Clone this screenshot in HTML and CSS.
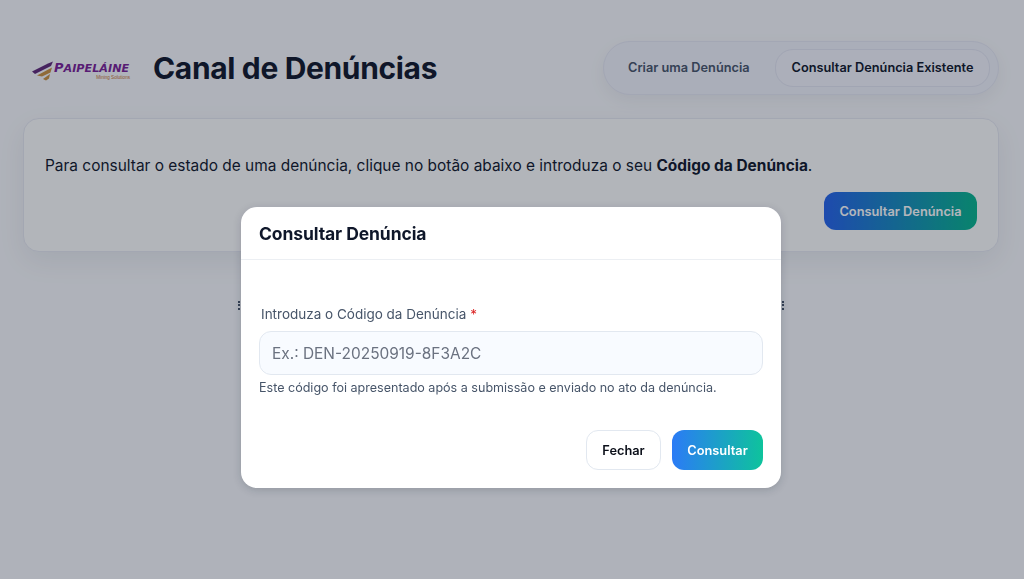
FILE: index.html
```html
<!DOCTYPE html>
<html lang="pt">
<head>
  <meta charset="UTF-8" />
  <meta name="viewport" content="width=device-width, initial-scale=1" />
  <title>Canal de Denúncias</title>
  <link rel="stylesheet" href="styles.css">
</head>
<body>
  <header class="topbar">
    <div class="brand">
      <svg class="logo" viewBox="0 0 100 24" width="100" height="24" aria-label="Paipeláine">
        <path d="M0 14.5 L16 6.5 L21 4.5 L19 9 L3 17 Z" fill="#5f2a78" />
        <path d="M5 18.5 L20 10.5 L18.5 15.5 L10 19.5 Z" fill="#c9913f" />
        <path d="M11 22 L18 17 L17 21.5 L14 23.5 Z" fill="#c9913f" />
        <text x="22" y="14.5" class="logo-name"><tspan class="logo-cap">P</tspan>AIPELÁINE</text>
        <text x="98" y="22" class="logo-sub" text-anchor="end">Mining Solutions</text>
      </svg>
      <h1>Canal de Denúncias</h1>
    </div>
    <nav class="tabs">
      <a class="tab" href="#">Criar uma Denúncia</a>
      <a class="tab active" href="#">Consultar Denúncia Existente</a>
    </nav>
  </header>

  <section class="card">
    <p>Para consultar o estado de uma denúncia, clique no botão abaixo e introduza o seu <strong>Código da Denúncia</strong>.</p>
    <div class="card-actions">
      <button class="btn btn-grad btn-open">Consultar Denúncia</button>
    </div>
  </section>

  <div class="note-edge"></div>

  <div class="overlay">
    <div class="modal">
      <div class="modal-head">
        <h2>Consultar Denúncia</h2>
      </div>
      <div class="modal-body">
        <label class="field-label" for="codigo">Introduza o Código da Denúncia <span class="req">*</span></label>
        <input class="field" id="codigo" type="text" placeholder="Ex.: DEN-20250919-8F3A2C" />
        <small class="hint">Este código foi apresentado após a submissão e enviado no ato da denúncia.</small>
      </div>
      <div class="modal-foot">
        <button class="btn btn-plain">Fechar</button>
        <button class="btn btn-grad btn-bright">Consultar</button>
      </div>
    </div>
  </div>
</body>
</html>
```

FILE: styles.css
```css
:root {
  --bg: #f8fafc;
  --ink: #0f172a;
  --muted: #475569;
  --line: #e2e8f0;
}

* {
  box-sizing: border-box;
}

html, body {
  height: 100%;
  overflow: hidden;
}

body {
  margin: 0;
  padding: 41px 25px 0 23px;
  background: var(--bg);
  color: var(--ink);
  font-family: Inter, 'Liberation Sans', sans-serif;
}

.topbar {
  display: flex;
  align-items: center;
  justify-content: space-between;
  height: 54px;
  margin-bottom: 23px;
}

.brand {
  display: flex;
  align-items: center;
  gap: 21px;
  padding-left: 9px;
}

.logo {
  display: block;
  margin-top: 2px;
}

.logo-name {
  font-family: 'DejaVu Sans', sans-serif;
  font-size: 11.2px;
  font-weight: 700;
  font-style: italic;
  fill: #7a1f96;
}

.logo-cap {
  font-size: 13px;
}

.logo-sub {
  font-family: 'Liberation Sans', sans-serif;
  font-size: 4.6px;
  fill: #c8742f;
}

h1 {
  margin: 0;
  font-size: 30px;
  font-weight: 700;
  line-height: 1.2;
  letter-spacing: -0.35px;
}

.tabs {
  display: flex;
  align-items: center;
  gap: 8px;
  width: 396px;
  height: 54px;
  padding: 7px 8px 7px 7px;
  background: #f1f3fb;
  border: 1px solid #e6e9f4;
  border-radius: 27px;
  box-shadow: 0 6px 18px rgba(15, 23, 42, 0.06);
}

.tab {
  display: block;
  padding: 10px 16px;
  border: 1px solid transparent;
  border-radius: 18px;
  color: var(--muted);
  font-size: 12.75px;
  font-weight: 600;
  line-height: 16px;
  text-decoration: none;
  white-space: nowrap;
}

.tab.active {
  color: var(--ink);
  border-color: #e3e6f2;
  background: #f3f5fc;
}

.card {
  height: 134px;
  padding: 35px 21px 0;
  background: #fdfefd;
  border: 1px solid #e6e9f1;
  border-radius: 16px;
  box-shadow: 0 10px 28px rgba(15, 23, 42, 0.07);
}

.card p {
  margin: 0 0 14px;
  font-size: 15.45px;
  line-height: 24px;
}

.card-actions {
  display: flex;
  justify-content: flex-end;
}

.btn {
  font-family: inherit;
  font-size: 12.8px;
  font-weight: 600;
  border-radius: 12px;
  cursor: pointer;
}

.btn-grad {
  border: 0;
  color: #fff;
  background: linear-gradient(90deg, #2563eb, #06b68c);
}

.btn-open {
  width: 153px;
  height: 38px;
}

.note-edge {
  width: 546px;
  height: 9px;
  margin: 49px 0 0 215px;
  border-left: 2px dotted #475569;
  border-right: 2px dotted #475569;
}

.overlay {
  position: fixed;
  inset: 0;
  display: flex;
  justify-content: center;
  align-items: flex-start;
  padding: 207px 2px 0 0;
  background: rgba(15, 23, 42, 0.315);
}

.modal {
  width: 540px;
  height: 281px;
  background: #fff;
  border-radius: 16px;
  box-shadow: 0 2px 8px rgba(15, 23, 42, 0.18);
  overflow: hidden;
}

.modal-head {
  height: 53px;
  padding: 0 18px;
  display: flex;
  align-items: center;
  border-bottom: 1px solid #eceff3;
}

h2 {
  margin: 0;
  font-size: 17.5px;
  font-weight: 700;
  letter-spacing: -0.1px;
}

.modal-body {
  padding: 46px 18px 0;
  height: 170px;
}

.field-label {
  display: block;
  padding-left: 2px;
  margin-bottom: 8px;
  font-size: 13.5px;
  line-height: 17px;
  color: var(--muted);
}

.req {
  color: #dc2626;
}

.field {
  display: block;
  width: 100%;
  height: 44px;
  padding: 0 12px;
  background: #f8fbff;
  border: 1px solid var(--line);
  border-radius: 12px;
  font-family: inherit;
  font-size: 15.45px;
  color: var(--ink);
}

.field::placeholder {
  color: #6b7280;
  opacity: 1;
}

.hint {
  display: block;
  margin-top: 5px;
  font-size: 12.55px;
  line-height: 16px;
  color: var(--muted);
}

.modal-foot {
  display: flex;
  justify-content: flex-end;
  gap: 11px;
  padding: 0 18px;
}

.btn-plain {
  width: 75px;
  height: 40px;
  background: #fff;
  border: 1px solid var(--line);
  color: #0b0f19;
}

.btn-bright {
  width: 91px;
  height: 40px;
  background: linear-gradient(90deg, #2b7bf6, #0ec39c);
}
```
